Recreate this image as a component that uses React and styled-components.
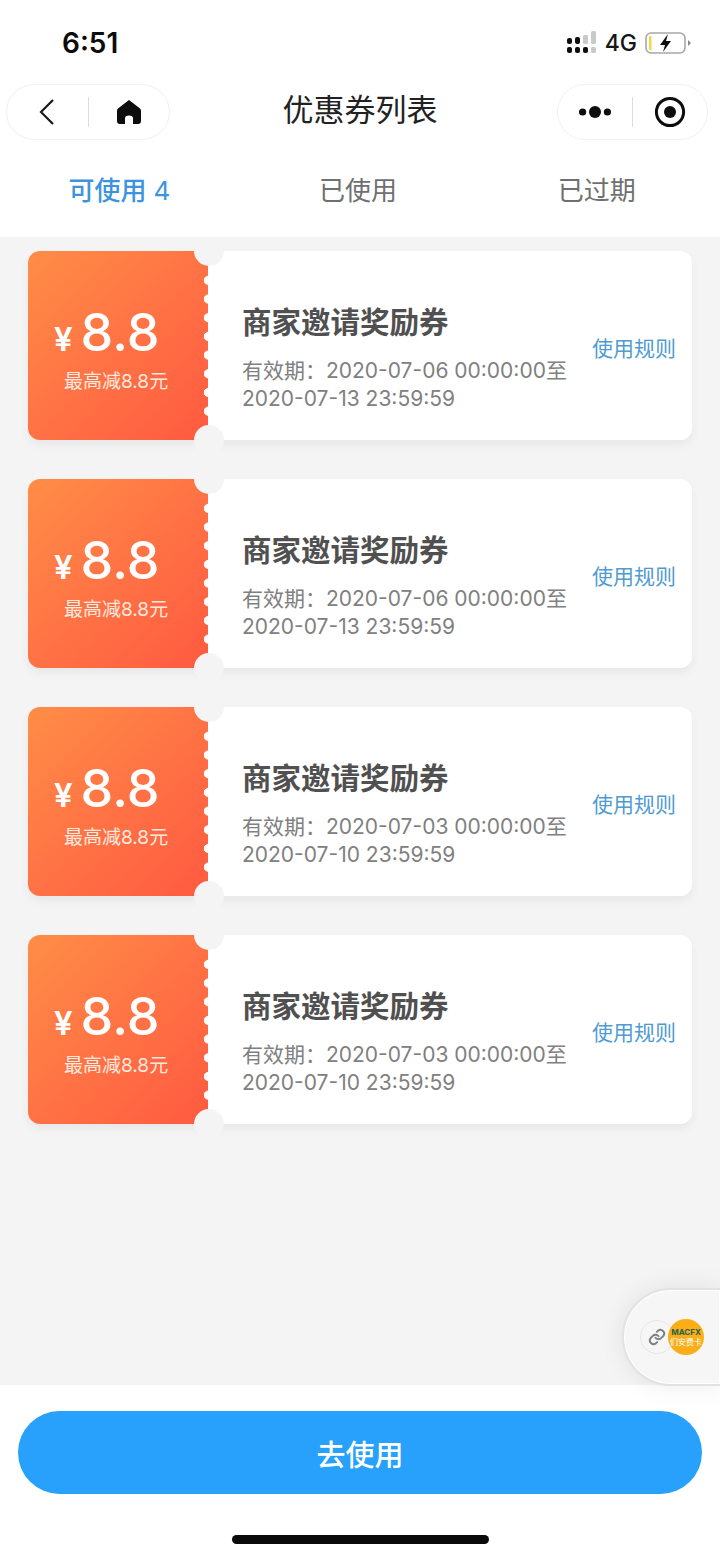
import React from "react"
import styled, { createGlobalStyle } from "styled-components"

const GlobalStyle = createGlobalStyle`
  html, body {
    margin: 0;
    padding: 0;
    background: #fff;
  }
  * {
    box-sizing: border-box;
  }
`

const Page = styled.div`
  position: relative;
  width: 720px;
  height: 1558px;
  display: flex;
  flex-direction: column;
  overflow: hidden;
  background: #fff;
  font-family: Inter, "Noto Sans CJK SC", sans-serif;
`

const StatusBar = styled.div`
  height: 84px;
  flex: none;
  display: flex;
  align-items: center;
  justify-content: space-between;
  padding: 2px 28px 0 62px;
`

const Time = styled.div`
  font-size: 28px;
  font-weight: 600;
  color: #0c0c0c;
`

const StatusRight = styled.div`
  display: flex;
  align-items: center;
  gap: 8px;
`

const Network = styled.span`
  font-size: 23px;
  font-weight: 500;
  color: #161616;
`

const NavBar = styled.div`
  height: 56px;
  flex: none;
  display: grid;
  grid-template-columns: 1fr auto 1fr;
  align-items: center;
  padding: 0 12px 0 6px;
`

const Capsule = styled.div`
  height: 56px;
  width: ${(p) => p.$width}px;
  justify-self: ${(p) => p.$side};
  display: grid;
  grid-template-columns: 1fr 1px 1fr;
  align-items: center;
  justify-items: center;
  border: 1px solid #f0f0f0;
  border-radius: 28px;
  background: #fff;
`

const Divider = styled.div`
  width: 1px;
  height: 30px;
  background: #dcdcdc;
`

const NavTitle = styled.div`
  margin: 0 0 10px 6px;
  font-size: 31px;
  color: #222;
`

const Tabs = styled.div`
  height: 97px;
  flex: none;
  display: grid;
  grid-template-columns: repeat(3, 1fr);
  align-items: center;
  padding: 0 4px 0 0;
`

const Tab = styled.div`
  text-align: center;
  font-size: 26px;
  font-weight: ${(p) => (p.$active ? 500 : 400)};
  color: ${(p) => (p.$active ? "#3d94de" : "#6f6f6f")};
`

const TabCount = styled.span`
  font-weight: 400;
`

const List = styled.div`
  flex: 1;
  display: flex;
  flex-direction: column;
  gap: 39px;
  padding: 14px 28px 0;
  overflow: hidden;
  background: #f4f4f4;
`

const Ticket = styled.div`
  position: relative;
  height: 189px;
  flex: none;
  display: flex;
  border-radius: 12px;
  box-shadow: 0 5px 10px rgba(0, 0, 0, 0.05);
`

const Stub = styled.div`
  width: 180px;
  flex: none;
  display: flex;
  flex-direction: column;
  padding: 52px 0 0 26px;
  border-radius: 12px 0 0 12px;
  color: #fff;
  background: linear-gradient(135deg, #ff8d46 0%, #ff7345 50%, #ff5a40 100%);
`

const Amount = styled.div`
  display: flex;
  align-items: baseline;
  gap: 8px;
  height: 60px;
  line-height: 60px;
`

const Yen = styled.span`
  font-size: 33px;
  font-weight: 600;
`

const Value = styled.span`
  font-size: 52px;
  font-weight: 500;
`

const Limit = styled.div`
  margin: 7px 0 0 10px;
  font-size: 19px;
  line-height: 24px;
  white-space: nowrap;
  color: #ffe9df;
`

const Perforation = styled.div`
  position: absolute;
  left: 176px;
  top: 20px;
  width: 4px;
  height: 150px;
  background: radial-gradient(circle at 100% 50%, #fff 4px, transparent 4.6px) 0 0 / 4px 18.7px repeat-y;
`

const Notch = styled.div`
  position: absolute;
  left: 166px;
  width: 30px;
  height: 30px;
  border-radius: 50%;
  background: #f4f4f4;
  ${(p) => (p.$bottom ? "bottom: -15px;" : "top: -15px;")}
`

const Body = styled.div`
  flex: 1;
  display: flex;
  justify-content: space-between;
  padding: 51px 16px 0 34px;
  border-radius: 0 12px 12px 0;
  background: #fff;
`

const Title = styled.div`
  font-size: 29.5px;
  font-weight: 600;
  line-height: 40px;
  color: #505050;
`

const Dates = styled.div`
  margin-top: 15px;
  font-size: 21px;
  line-height: 28px;
  white-space: nowrap;
  color: #808080;
`

const Rule = styled.div`
  margin-top: 31px;
  font-size: 21px;
  line-height: 32px;
  white-space: nowrap;
  color: #4f9bd2;
`

const Footer = styled.div`
  height: 173px;
  flex: none;
  display: flex;
  flex-direction: column;
  align-items: center;
  padding-top: 26px;
  background: #fff;
`

const UseButton = styled.div`
  width: 684px;
  height: 83px;
  display: flex;
  align-items: center;
  justify-content: center;
  border-radius: 42px;
  font-size: 29px;
  font-weight: 500;
  color: #fff;
  background: #27a1fb;
`

const HomeBar = styled.div`
  width: 257px;
  height: 9px;
  margin-top: 41px;
  border-radius: 5px;
  background: #0a0a0a;
`

const Floating = styled.div`
  position: absolute;
  right: -2px;
  top: 1288px;
  width: 100px;
  height: 98px;
  display: flex;
  align-items: center;
  padding-left: 16px;
  border: 2px solid #e2e2e2;
  border-radius: 49px 0 0 49px;
  background: #f6f6f6;
  box-shadow: 0 0 24px rgba(0, 0, 0, 0.08), inset 0 0 0 1px #fff;
`

const LinkBadge = styled.div`
  width: 34px;
  height: 34px;
  flex: none;
  display: flex;
  align-items: center;
  justify-content: center;
  border: 1px solid #e6e6e6;
  border-radius: 50%;
`

const Logo = styled.div`
  width: 36px;
  height: 36px;
  flex: none;
  margin-left: -6px;
  display: flex;
  flex-direction: column;
  align-items: center;
  justify-content: center;
  border-radius: 50%;
  overflow: hidden;
  font-size: 8px;
  line-height: 10px;
  white-space: nowrap;
  color: #fff;
  background: #fbae17;
`

const LogoMark = styled.span`
  font-size: 8px;
  font-weight: 700;
  color: #27614b;
`

const SignalIcon = () => (
  <svg width="30" height="24" viewBox="0 0 30 24">
    <g fill="#0d0d0d">
      <rect x="0" y="7" width="5" height="6" rx="2" />
      <rect x="8" y="6" width="5" height="7" rx="2" />
      <rect x="0" y="16" width="5" height="6" rx="2" />
      <rect x="8" y="16" width="5" height="6" rx="2" />
      <rect x="16" y="16" width="5" height="6" rx="2" />
    </g>
    <g fill="#c9c9c9">
      <rect x="16" y="4" width="5" height="9" rx="1.5" />
      <rect x="24" y="0" width="5" height="13" rx="1.5" />
      <rect x="24" y="16" width="5" height="6" rx="1.5" />
    </g>
  </svg>
)

const BatteryIcon = () => (
  <svg width="47" height="24" viewBox="0 0 47 24">
    <rect x="1" y="2" width="39" height="20" rx="5" fill="none" stroke="#a8a8a8" strokeWidth="1.6" />
    <rect x="4" y="5" width="2.5" height="14" fill="#f0d84a" />
    <path d="M43 9 L46 12 L43 15 Z" fill="#8a8a8a" />
    <path d="M23 3 L15 14 L20 14 L18 21 L26 10 L21 10 Z" fill="#fff" stroke="#fff" strokeWidth="2" />
    <path d="M23 3 L15 14 L20 14 L18 21 L26 10 L21 10 Z" fill="#0d0d0d" />
  </svg>
)

const BackIcon = () => (
  <svg width="16" height="28" viewBox="0 0 16 28">
    <path d="M14 2 L2 14 L14 26" fill="none" stroke="#1a1a1a" strokeWidth="2.2" />
  </svg>
)

const HomeIcon = () => (
  <svg width="26" height="26" viewBox="0 0 26 26">
    <path
      d="M13 1 L24 9.5 Q25 10.4 25 12 L25 22 Q25 25 22 25 L17 25 L17 19 Q17 16.5 13 16.5 Q9 16.5 9 19 L9 25 L4 25 Q1 25 1 22 L1 12 Q1 10.4 2 9.5 Z"
      fill="#0d0d0d"
    />
  </svg>
)

const MoreIcon = () => (
  <svg width="32" height="14" viewBox="0 0 32 14">
    <circle cx="3.6" cy="7" r="3.6" fill="#0d0d0d" />
    <circle cx="16" cy="7" r="6" fill="#0d0d0d" />
    <circle cx="28.4" cy="7" r="3.6" fill="#0d0d0d" />
  </svg>
)

const TargetIcon = () => (
  <svg width="32" height="32" viewBox="0 0 32 32">
    <circle cx="16" cy="16" r="13.6" fill="none" stroke="#0d0d0d" strokeWidth="3" />
    <circle cx="16" cy="16" r="6" fill="#0d0d0d" />
  </svg>
)

const LinkIcon = () => (
  <svg width="18" height="18" viewBox="0 0 24 24" fill="none" stroke="#7a7f87" strokeWidth="2.6" strokeLinecap="round">
    <path d="M10 13a5 5 0 0 0 7.5.5l3-3a5 5 0 0 0-7-7l-1.7 1.7" />
    <path d="M14 11a5 5 0 0 0-7.5-.5l-3 3a5 5 0 0 0 7 7l1.7-1.7" />
  </svg>
)

const coupons = [
  { from: "2020-07-06", to: "2020-07-13" },
  { from: "2020-07-06", to: "2020-07-13" },
  { from: "2020-07-03", to: "2020-07-10" },
  { from: "2020-07-03", to: "2020-07-10" },
]

const Coupon = ({ from, to }) => (
  <Ticket>
    <Stub>
      <Amount>
        <Yen>¥</Yen>
        <Value>8.8</Value>
      </Amount>
      <Limit>最高减8.8元</Limit>
    </Stub>
    <Perforation />
    <Notch />
    <Notch $bottom />
    <Body>
      <div>
        <Title>商家邀请奖励券</Title>
        <Dates>
          有效期：{from} 00:00:00至
          <br />
          {to} 23:59:59
        </Dates>
      </div>
      <Rule>使用规则</Rule>
    </Body>
  </Ticket>
)

export default function App() {
  return (
    <Page>
      <GlobalStyle />
      <StatusBar>
        <Time>6:51</Time>
        <StatusRight>
          <SignalIcon />
          <Network>4G</Network>
          <BatteryIcon />
        </StatusRight>
      </StatusBar>
      <NavBar>
        <Capsule $width={164} $side="start">
          <BackIcon />
          <Divider />
          <HomeIcon />
        </Capsule>
        <NavTitle>优惠券列表</NavTitle>
        <Capsule $width={151} $side="end">
          <MoreIcon />
          <Divider />
          <TargetIcon />
        </Capsule>
      </NavBar>
      <Tabs>
        <Tab $active>
          可使用 <TabCount>4</TabCount>
        </Tab>
        <Tab>已使用</Tab>
        <Tab>已过期</Tab>
      </Tabs>
      <List>
        {coupons.map((c, i) => (
          <Coupon key={i} from={c.from} to={c.to} />
        ))}
      </List>
      <Footer>
        <UseButton>去使用</UseButton>
        <HomeBar />
      </Footer>
      <Floating>
        <LinkBadge>
          <LinkIcon />
        </LinkBadge>
        <Logo>
          <LogoMark>MACFX</LogoMark>
          <span>们安费卡</span>
        </Logo>
      </Floating>
    </Page>
  )
}
